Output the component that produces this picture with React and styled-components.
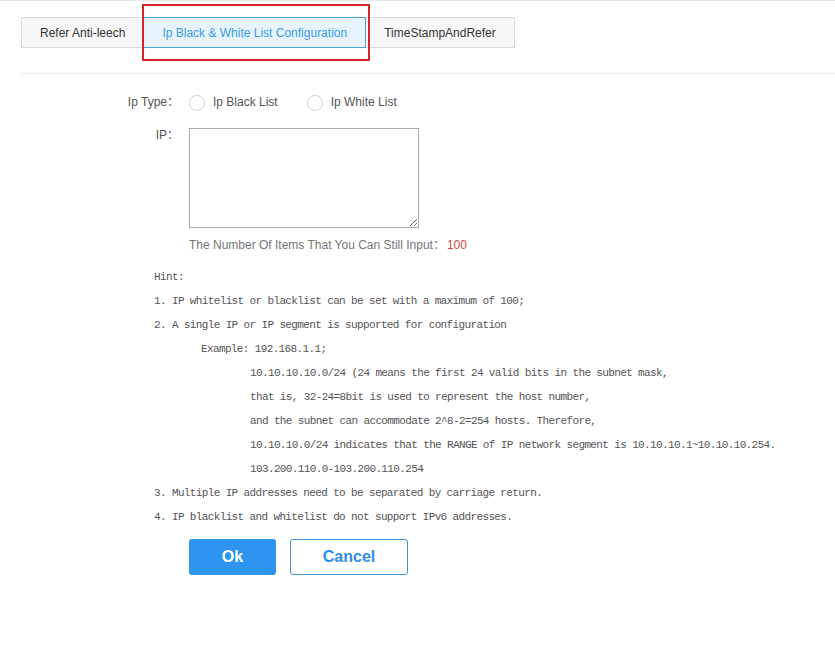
import React, { useState } from "react";
import styled, { createGlobalStyle } from "styled-components";

const tabs = ["Refer Anti-leech", "Ip Black & White List Configuration", "TimeStampAndRefer"];

const hints = [
  { indent: 0, text: "Hint:" },
  { indent: 0, text: "1. IP whitelist or blacklist can be set with a maximum of 100;" },
  { indent: 0, text: "2. A single IP or IP segment is supported for configuration" },
  { indent: 1, text: "Example: 192.168.1.1;" },
  { indent: 2, text: "10.10.10.10.0/24 (24 means the first 24 valid bits in the subnet mask," },
  { indent: 2, text: "that is, 32-24=8bit is used to represent the host number," },
  { indent: 2, text: "and the subnet can accommodate 2^8-2=254 hosts. Therefore," },
  { indent: 2, text: "10.10.10.0/24 indicates that the RANGE of IP network segment is 10.10.10.1~10.10.10.254." },
  { indent: 2, text: "103.200.110.0-103.200.110.254" },
  { indent: 0, text: "3. Multiple IP addresses need to be separated by carriage return." },
  { indent: 0, text: "4. IP blacklist and whitelist do not support IPv6 addresses." },
];

function App() {
  const [active, setActive] = useState(1);
  const [type, setType] = useState(null);
  const [ips, setIps] = useState("");
  const left = 100 - ips.split("\n").filter((l) => l.trim()).length;

  return (
    <Page>
      <GlobalStyle />
      <TabBar>
        {tabs.map((t, i) => (
          <Tab key={t} $active={i === active} onClick={() => setActive(i)}>
            {t}
            {i === active && <Highlight />}
          </Tab>
        ))}
      </TabBar>
      <Divider />
      <Form>
        <Row>
          <Label>Ip Type：</Label>
          <Radios>
            <RadioItem onClick={() => setType("black")}>
              <Circle $checked={type === "black"} />
              Ip Black List
            </RadioItem>
            <RadioItem onClick={() => setType("white")}>
              <Circle $checked={type === "white"} />
              Ip White List
            </RadioItem>
          </Radios>
        </Row>
        <Row $top>
          <Label $top>IP：</Label>
          <Area value={ips} onChange={(e) => setIps(e.target.value)} />
        </Row>
        <Counter>
          The Number Of Items That You Can Still Input：<Num>{left}</Num>
        </Counter>
      </Form>
      <Hint>
        {hints.map((h, i) => (
          <HintLine key={i} $indent={h.indent}>
            {h.text}
          </HintLine>
        ))}
      </Hint>
      <Actions>
        <OkButton>Ok</OkButton>
        <CancelButton>Cancel</CancelButton>
      </Actions>
    </Page>
  );
}

const GlobalStyle = createGlobalStyle`
  body {
    margin: 0;
    background: #fff;
    font-family: "Liberation Sans", Arial, "Noto Sans CJK SC", sans-serif;
  }
`;

const Page = styled.div`
  border-top: 1px solid #e6e6e6;
  padding: 16px 0 60px 21px;
`;

const TabBar = styled.div`
  display: flex;
`;

const Tab = styled.div`
  position: relative;
  height: 31px;
  box-sizing: border-box;
  padding: 0 18px;
  display: flex;
  align-items: center;
  font-size: 12px;
  cursor: pointer;
  color: ${(p) => (p.$active ? "#3a9de3" : "#333")};
  background: ${(p) => (p.$active ? "#e8f4fd" : "#f7f7f7")};
  border: 1px solid ${(p) => (p.$active ? "#4aa3df" : "#dcdcdc")};
  margin-left: -1px;
  z-index: ${(p) => (p.$active ? 1 : 0)};
  &:first-child {
    margin-left: 0;
  }
`;

const Highlight = styled.span`
  position: absolute;
  top: -14px;
  left: -2px;
  right: -5px;
  bottom: -14px;
  border: 2px solid #d8232c;
  pointer-events: none;
`;

const Divider = styled.div`
  height: 1px;
  background: #ececec;
  margin-top: 25px;
`;

const Form = styled.div`
  margin-top: 18px;
  display: flex;
  flex-direction: column;
`;

const Row = styled.div`
  display: flex;
  align-items: ${(p) => (p.$top ? "flex-start" : "center")};
  margin-top: ${(p) => (p.$top ? "16px" : "0")};
`;

const Label = styled.div`
  width: 158px;
  margin-right: 10px;
  text-align: right;
  font-size: 12px;
  color: #555;
  line-height: ${(p) => (p.$top ? "14px" : "20px")};
`;

const Radios = styled.div`
  display: flex;
  gap: 29px;
  height: 20px;
  align-items: center;
`;

const RadioItem = styled.label`
  display: flex;
  align-items: center;
  gap: 8px;
  font-size: 12px;
  color: #555;
  cursor: pointer;
`;

const Circle = styled.span`
  width: 14px;
  height: 14px;
  border-radius: 50%;
  border: 1px solid #d3d3d3;
  background: #fff;
  box-shadow: ${(p) => (p.$checked ? "inset 0 0 0 4px #2d95f0" : "none")};
  margin-top: 2px;
`;

const Area = styled.textarea`
  width: 230px;
  height: 100px;
  box-sizing: border-box;
  border: 1px solid #a9a9a9;
  margin: 0;
  padding: 2px;
  font-size: 12px;
  outline: none;
`;

const Counter = styled.div`
  margin: 7px 0 0 168px;
  font-size: 12px;
  line-height: 20px;
  color: #777;
`;

const Num = styled.span`
  color: #d24a43;
  margin-left: 2px;
`;

const Hint = styled.div`
  margin: 10px 0 0 133px;
  font-family: "Liberation Mono", "Courier New", monospace;
  font-size: 11px;
  letter-spacing: -0.63px;
  color: #555;
`;

const HintLine = styled.div`
  line-height: 24px;
  white-space: nowrap;
  padding-left: ${(p) => p.$indent * 47 + (p.$indent === 2 ? 2 : 0)}px;
`;

const Actions = styled.div`
  display: flex;
  gap: 14px;
  margin: 10px 0 0 168px;
`;

const OkButton = styled.button`
  width: 87px;
  height: 36px;
  border: none;
  border-radius: 3px;
  background: #2d95f0;
  color: #fff;
  font-family: inherit;
  font-size: 16px;
  font-weight: bold;
  cursor: pointer;
`;

const CancelButton = styled.button`
  width: 118px;
  height: 36px;
  border: 1px solid #3c93dc;
  border-radius: 3px;
  background: #fff;
  color: #2f8fe5;
  font-family: inherit;
  font-size: 16px;
  font-weight: bold;
  cursor: pointer;
`;

export default App;
